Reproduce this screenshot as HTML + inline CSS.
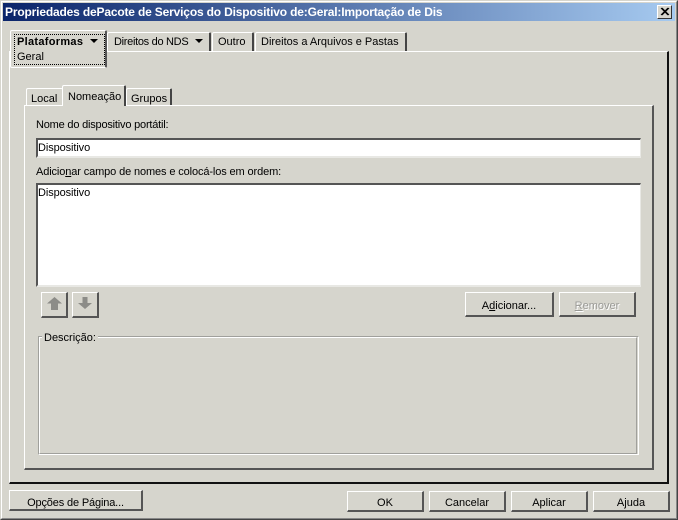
<!DOCTYPE html>
<html><head><meta charset="utf-8"><style>
html,body{margin:0;padding:0;width:678px;height:520px;overflow:hidden;background:#d6d5cd}
*{box-sizing:border-box}
div,span,svg.a{position:absolute}
.t{font:11px/13px "Liberation Sans",sans-serif;color:#000;white-space:nowrap}
.t span{position:static}
u{text-decoration:underline}
.btn{background:#d6d5cd;border-top:1px solid #fff;border-left:1px solid #fff;border-right:2px solid #555;border-bottom:2px solid #555;text-align:center;font:11px/22px "Liberation Sans",sans-serif;white-space:nowrap;color:#000}
.tab{background:#d6d5cd;border-top:1px solid #fff;border-left:1px solid #fff;border-right:2px solid #444;border-top-left-radius:2px;border-top-right-radius:2px}
.inp{background:#fff;border-top:2px solid #555;border-left:2px solid #555;border-right:1px solid #e8e8e4;border-bottom:2px solid #e8e8e4}
</style></head><body>
<div style="left:0;top:0;width:678px;height:520px;border-top:1px solid #d6d5cd;border-left:1px solid #d6d5cd;border-right:1px solid #444;border-bottom:1px solid #444"></div>
<div style="left:1px;top:1px;width:676px;height:518px;border-top:1px solid #fff;border-left:1px solid #fff;border-right:1px solid #888;border-bottom:1px solid #888"></div>
<div style="left:3px;top:3px;width:672px;height:18px;background:linear-gradient(90deg,#0a246a,#a6caf0)"></div>
<div class="t" style="left:5px;top:6px;color:#fff;font:bold 12px/13px 'Liberation Sans',sans-serif;letter-spacing:-.17px">Propriedades dePacote de Serviços do Dispositivo de:Geral:Importação de Dis</div>
<div style="left:657px;top:5px;width:15px;height:14px;background:#d6d5cd;border-top:1px solid #fff;border-left:1px solid #fff;border-right:1px solid #333;border-bottom:1px solid #333"></div>
<svg class="a" style="left:660px;top:7px" width="10" height="10"><path d="M1 1L8 8M2 1L9 8M8 1L1 8M9 1L2 8" stroke="#000" stroke-width="1"/></svg>

<div style="left:9px;top:51px;width:660px;height:433px;border-top:1px solid #fff;border-left:1px solid #fff;border-right:2px solid #111;border-bottom:2px solid #111"></div>

<div class="tab" style="left:107px;top:32px;width:104px;height:19px"></div>
<div class="t" style="left:114px;top:36px;letter-spacing:-.3px">Direitos do NDS</div>
<svg class="a" style="left:195px;top:39px" width="9" height="5"><path d="M0 0H8L4 4Z" fill="#000"/></svg>
<div class="tab" style="left:212px;top:32px;width:42px;height:19px"></div>
<div class="t" style="left:218px;top:36px">Outro</div>
<div class="tab" style="left:255px;top:32px;width:152px;height:19px"></div>
<div class="t" style="left:261px;top:36px">Direitos a Arquivos e Pastas</div>

<div style="left:10px;top:30px;width:97px;height:38px;background:#d6d5cd;border-top:1px solid #fff;border-left:1px solid #fff;border-right:2px solid #555;border-bottom:1px solid #fff;border-radius:2px"></div>
<div style="left:14px;top:34px;width:91px;height:31px;border:1px dotted #000"></div>
<div class="t" style="left:17px;top:36px;font-weight:bold;letter-spacing:.3px">Plataformas</div>
<svg class="a" style="left:90px;top:39px" width="9" height="5"><path d="M0 0H8L4 4Z" fill="#000"/></svg>
<div class="t" style="left:17px;top:51px">Geral</div>

<div style="left:24px;top:105px;width:630px;height:365px;border-top:1px solid #fff;border-left:1px solid #fff;border-right:2px solid #555;border-bottom:2px solid #555"></div>
<div class="tab" style="left:26px;top:88px;width:37px;height:17px;border-right:none"></div>
<div class="t" style="left:31px;top:93px">Local</div>
<div class="tab" style="left:126px;top:88px;width:46px;height:17px"></div>
<div class="t" style="left:131px;top:93px">Grupos</div>
<div class="tab" style="left:62px;top:85px;width:64px;height:21px;border-bottom:none"></div>
<div class="t" style="left:68px;top:91px">Nomeação</div>

<div class="t" style="left:36px;top:119px;letter-spacing:-.2px">Nome do dispositivo portátil:</div>
<div class="inp" style="left:36px;top:138px;width:605px;height:20px"></div>
<div class="t" style="left:38px;top:142px;letter-spacing:-.1px">Dispositivo</div>
<div class="t" style="left:36px;top:166px;letter-spacing:-.12px">Adicio<u>n</u>ar campo de nomes e colocá-los em ordem:</div>
<div class="inp" style="left:36px;top:183px;width:605px;height:104px"></div>
<div class="t" style="left:38px;top:187px;letter-spacing:-.1px">Dispositivo</div>

<div class="btn" style="left:41px;top:292px;width:27px;height:26px"></div>
<svg class="a" style="left:46px;top:296px" width="18" height="17"><path d="M8.500 1L16 7.500H12V14H5V7.500H1Z" fill="#8c8c88"/></svg>
<div class="btn" style="left:72px;top:292px;width:27px;height:26px"></div>
<svg class="a" style="left:77px;top:296px" width="18" height="17"><path d="M5.500 1H10.500V7H15L8 13L1 7H5.500Z" fill="#8c8c88"/></svg>

<div class="btn" style="left:465px;top:292px;width:89px;height:25px;line-height:26px">A<u>d</u>icionar...</div>
<div class="btn" style="left:559px;top:292px;width:77px;height:25px;line-height:26px;color:#9a9a96;text-shadow:1px 1px 0 #fff"><u>R</u>emover</div>

<div style="left:38px;top:336px;width:601px;height:119px;border-top:1px solid #a0a09c;border-left:1px solid #a0a09c;border-right:1px solid #fff;border-bottom:1px solid #fff"></div>
<div style="left:39px;top:337px;width:598px;height:117px;border-top:1px solid #fff;border-left:1px solid #fff;border-right:1px solid #a0a09c;border-bottom:1px solid #a0a09c"></div>
<div class="t" style="left:42px;top:332px;padding:0 2px;background:#d6d5cd">Descrição:</div>

<div class="btn" style="left:9px;top:490px;width:134px;height:21px;line-height:24px;letter-spacing:-.15px">Opções de Página...</div>
<div class="btn" style="left:347px;top:491px;width:77px;height:21px">OK</div>
<div class="btn" style="left:429px;top:491px;width:77px;height:21px">Cancelar</div>
<div class="btn" style="left:511px;top:491px;width:77px;height:21px">Aplicar</div>
<div class="btn" style="left:593px;top:491px;width:77px;height:21px">Ajuda</div>
</body></html>
